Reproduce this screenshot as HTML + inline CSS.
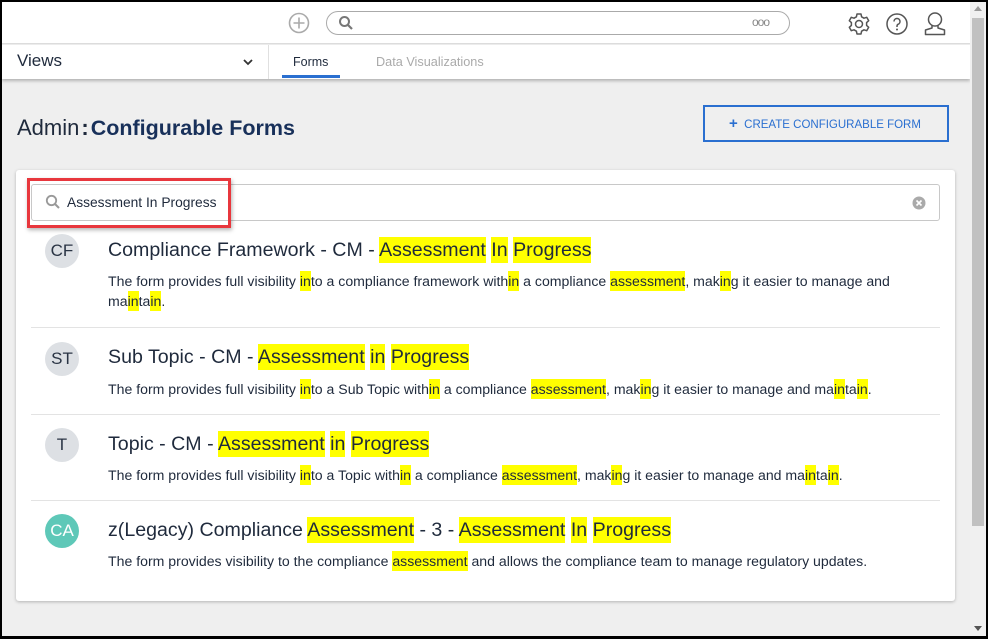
<!DOCTYPE html>
<html><head><style>
*{margin:0;padding:0;box-sizing:border-box}
body{width:988px;height:639px;overflow:hidden;background:#000;font-family:"Liberation Sans",sans-serif;position:relative}
#app{position:absolute;left:2px;top:2px;width:968px;height:634px;background:#efefef;overflow:hidden}
#sb{position:absolute;left:970px;top:2px;width:16px;height:634px;background:#f0f0f0}
#thumb{position:absolute;left:972px;top:18px;width:12px;height:508px;background:#c1c1c1}
.top{position:absolute;left:0;top:0;width:968px;height:42px;background:#fff;border-bottom:1px solid #ddd}
.nav{position:absolute;left:0;top:43px;width:968px;height:34px;background:#fff;box-shadow:0 2px 3px rgba(0,0,0,.25)}
.abs{position:absolute}
mark{background:#ffff00;color:inherit;padding:2px 0}
.ttl{position:absolute;left:106px;font-size:19.6px;color:#1f2a3c;white-space:nowrap}
.desc{position:absolute;left:106px;font-size:14.1px;color:#1f2a3c;line-height:20px;width:830px;white-space:nowrap}
.av{position:absolute;left:43px;width:34px;height:34px;border-radius:50%;background:#dde0e4;color:#2a3444;font-size:17px;text-align:center;line-height:34px}
.sep{position:absolute;left:29px;width:909px;height:1px;background:#e3e3e3}
</style></head><body>
<div id="app">
 <div class="top">
  <svg class="abs" style="left:286px;top:10px" width="22" height="22" viewBox="0 0 22 22"><circle cx="11" cy="11" r="9.5" fill="none" stroke="#aaa" stroke-width="1.6"/><path d="M11 5.5v11M5.5 11h11" stroke="#aaa" stroke-width="1.6"/></svg>
  <div class="abs" style="left:324px;top:9px;width:464px;height:24px;border:1.5px solid #aaa;border-radius:12px"></div>
  <svg class="abs" style="left:336px;top:13px" width="16" height="16" viewBox="0 0 16 16"><circle cx="6.5" cy="6.5" r="4.5" fill="none" stroke="#777" stroke-width="2"/><path d="M10 10l4 4" stroke="#777" stroke-width="2.2"/></svg>
  <div class="abs" style="left:750px;top:13px;font-size:12px;color:#888;letter-spacing:-1px">ooo</div>
  <svg class="abs" style="left:845px;top:10px" width="24" height="24" viewBox="0 0 24 24"><circle cx="12" cy="12" r="3.5" fill="none" stroke="#555" stroke-width="1.5"/><path d="M10 2h4l.6 2.8 2.4 1.4 2.7-.9 2 3.4-2.1 1.9v2.8l2.1 1.9-2 3.4-2.7-.9-2.4 1.4L14 22h-4l-.6-2.8-2.4-1.4-2.7.9-2-3.4 2.1-1.9v-2.8L2.3 8.7l2-3.4 2.7.9 2.4-1.4z" fill="none" stroke="#555" stroke-width="1.5" stroke-linejoin="round"/></svg>
  <svg class="abs" style="left:883px;top:10px" width="24" height="24" viewBox="0 0 24 24"><circle cx="12" cy="12" r="10" fill="none" stroke="#555" stroke-width="1.5"/><path d="M9 9.5a3 3 0 1 1 4 2.8c-.8.4-1 1-1 2v.7" fill="none" stroke="#555" stroke-width="1.5"/><circle cx="12" cy="17.5" r="1" fill="#555"/></svg>
  <svg class="abs" style="left:921px;top:9px" width="24" height="26" viewBox="0 0 24 26"><circle cx="12" cy="8.5" r="6.5" fill="none" stroke="#555" stroke-width="1.5"/><path d="M9 14.5v2.5L2.5 19v4.5h19V19L15 17v-2.5" fill="none" stroke="#555" stroke-width="1.5" stroke-linejoin="round"/></svg>
 </div>
 <div class="nav">
  <div class="abs" style="left:15px;top:6px;font-size:17px;color:#1f2a3c">Views</div>
  <svg class="abs" style="left:240px;top:12px" width="12" height="10" viewBox="0 0 12 10"><path d="M2 3l4 4 4-4" fill="none" stroke="#333" stroke-width="1.8"/></svg>
  <div class="abs" style="left:266px;top:0;width:1px;height:34px;background:#e0e0e0"></div>
  <div class="abs" style="left:291px;top:10px;font-size:12.5px;color:#1f2a3c">Forms</div>
  <div class="abs" style="left:280px;top:30px;width:58px;height:3px;background:#2a6fd0"></div>
  <div class="abs" style="left:374px;top:10px;font-size:12.7px;color:#aaa">Data Visualizations</div>
 </div>
 <div class="abs" style="left:15px;top:113px;font-size:22px;color:#1f2a3c;white-space:nowrap">Admin<b style="font-size:22px;margin:0 2px">:</b><span style="color:#18305a;font-weight:bold;font-size:21.5px">Configurable Forms</span></div>
 <div class="abs" style="left:701px;top:103px;width:246px;height:37px;border:2px solid #2a6fd0;color:#2a6fd0;font-size:11.5px;line-height:33px;padding-left:24px;white-space:nowrap"><b style="font-size:15px">+</b>&nbsp; CREATE CONFIGURABLE FORM</div>
 <div class="abs" style="left:14px;top:168px;width:939px;height:431px;background:#fff;border-radius:3px;box-shadow:0 1px 3px rgba(0,0,0,.25)"></div>
 <div class="abs" style="left:29px;top:182px;width:909px;height:37px;border:1px solid #c8c8c8;border-radius:3px;background:#fff"></div>
 <svg class="abs" style="left:43px;top:192px" width="16" height="16" viewBox="0 0 16 16"><circle cx="6.5" cy="6.5" r="4.7" fill="none" stroke="#999" stroke-width="1.8"/><path d="M10 10l4 4" stroke="#999" stroke-width="2"/></svg>
 <div class="abs" style="left:65px;top:193px;font-size:13.8px;color:#1f2a3c">Assessment In Progress</div>
 <svg class="abs" style="left:910px;top:194px" width="14" height="14" viewBox="0 0 14 14"><circle cx="7" cy="7" r="6.5" fill="#aaa"/><path d="M4.5 4.5l5 5M9.5 4.5l-5 5" stroke="#fff" stroke-width="1.6"/></svg>
 <div class="abs" style="left:25px;top:176px;width:204px;height:50px;border:3px solid #e8373d;box-shadow:1px 2px 4px rgba(0,0,0,.3)"></div>

 <div class="av" style="top:232px">CF</div>
 <div class="ttl" style="top:237px">Compliance Framework - CM - <mark>Assessment</mark> <mark>In</mark> <mark>Progress</mark></div>
 <div class="desc" style="top:269px">The form provides full visibility <mark>in</mark>to a compliance framework with<mark>in</mark> a compliance <mark>assessment</mark>, mak<mark>in</mark>g it easier to manage and<br>ma<mark>in</mark>ta<mark>in</mark>.</div>
 <div class="sep" style="top:325px"></div>

 <div class="av" style="top:340px">ST</div>
 <div class="ttl" style="top:344px">Sub Topic - CM - <mark>Assessment</mark> <mark>in</mark> <mark>Progress</mark></div>
 <div class="desc" style="top:377px">The form provides full visibility <mark>in</mark>to a Sub Topic with<mark>in</mark> a compliance <mark>assessment</mark>, mak<mark>in</mark>g it easier to manage and ma<mark>in</mark>ta<mark>in</mark>.</div>
 <div class="sep" style="top:412px"></div>

 <div class="av" style="top:426px">T</div>
 <div class="ttl" style="top:431px">Topic - CM - <mark>Assessment</mark> <mark>in</mark> <mark>Progress</mark></div>
 <div class="desc" style="top:463px">The form provides full visibility <mark>in</mark>to a Topic with<mark>in</mark> a compliance <mark>assessment</mark>, mak<mark>in</mark>g it easier to manage and ma<mark>in</mark>ta<mark>in</mark>.</div>
 <div class="sep" style="top:498px"></div>

 <div class="av" style="top:512px;background:#5ec8b8;color:#fff">CA</div>
 <div class="ttl" style="top:517px">z(Legacy) Compliance <mark>Assessment</mark> - 3 - <mark>Assessment</mark> <mark>In</mark> <mark>Progress</mark></div>
 <div class="desc" style="top:549px">The form provides visibility to the compliance <mark>assessment</mark> and allows the compliance team to manage regulatory updates.</div>
</div>
<div id="sb"></div><div id="thumb"></div>
<div class="abs" style="left:974px;top:6px;width:0;height:0;border-left:4px solid transparent;border-right:4px solid transparent;border-bottom:5px solid #999"></div>
<div class="abs" style="left:974px;top:626px;width:0;height:0;border-left:4px solid transparent;border-right:4px solid transparent;border-top:5px solid #555"></div>
</body></html>
